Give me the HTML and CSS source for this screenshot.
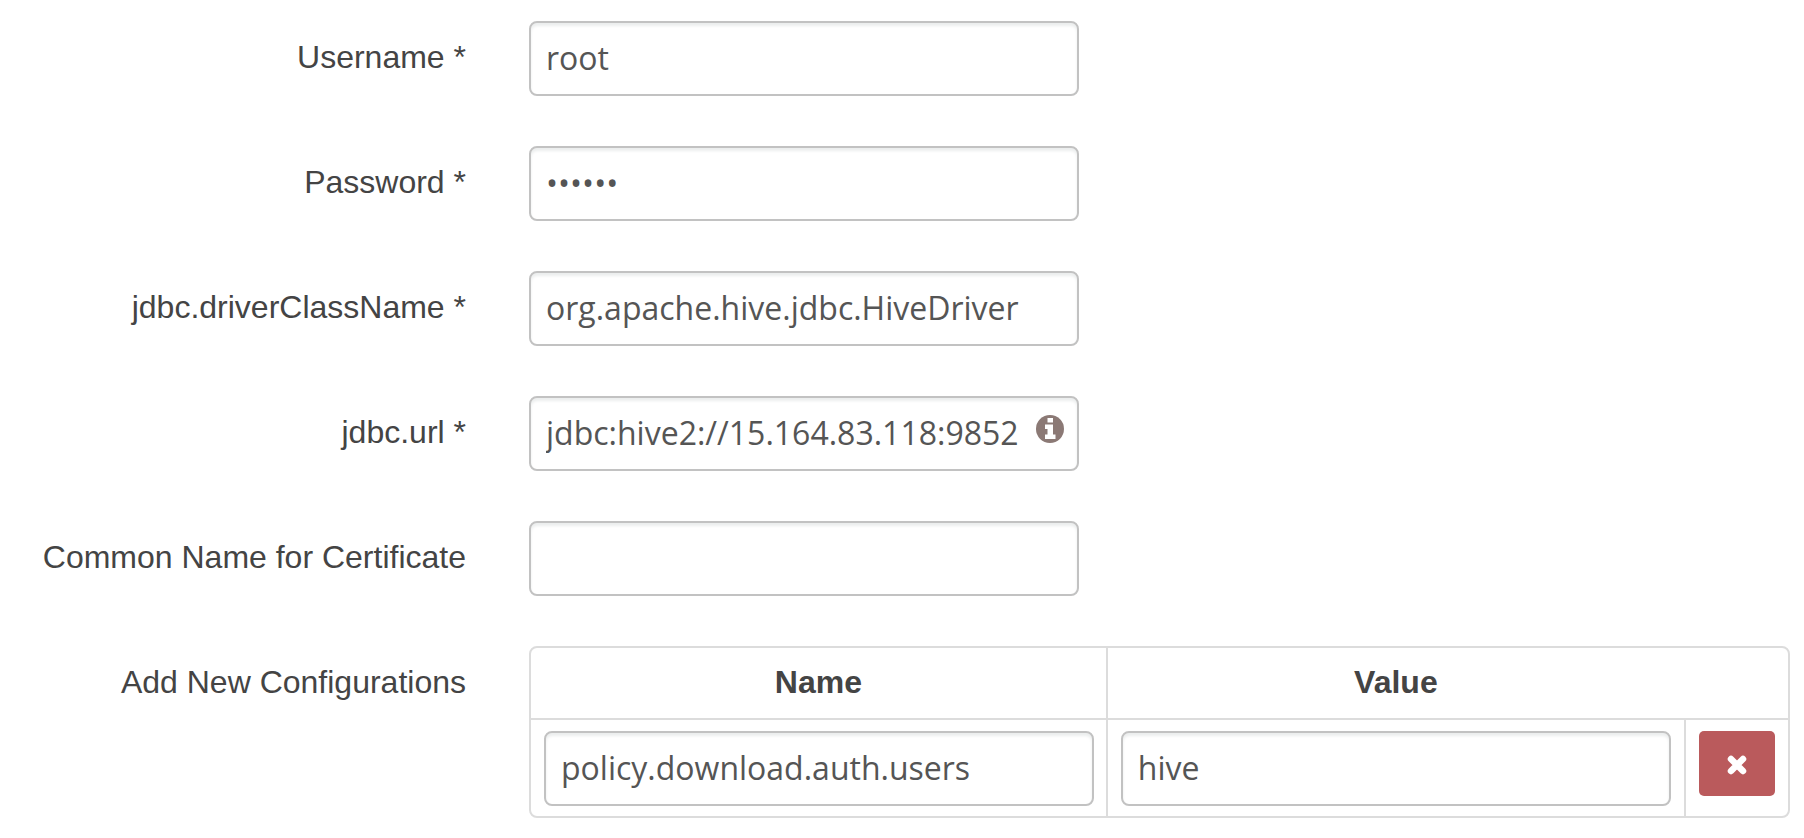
FILE: index.html
```html
<!DOCTYPE html>
<html lang="en">
<head>
<meta charset="utf-8">
<title>Service configuration</title>
<link rel="stylesheet" href="styles.css">
</head>
<body>
<form class="config-form">
  <div class="row">
    <label class="label" for="username">Username *</label>
    <div class="field"><input class="input" id="username" type="text" value="root"></div>
  </div>
  <div class="row">
    <label class="label" for="password">Password *</label>
    <div class="field"><input class="input" id="password" type="password" value="secret"></div>
  </div>
  <div class="row">
    <label class="label" for="driver">jdbc.driverClassName *</label>
    <div class="field"><input class="input" id="driver" type="text" value="org.apache.hive.jdbc.HiveDriver"></div>
  </div>
  <div class="row">
    <label class="label" for="url">jdbc.url *</label>
    <div class="field">
      <input class="input input-url" id="url" type="text" value="jdbc:hive2://15.164.83.118:9852">
      <svg class="info" viewBox="0 0 28 28" aria-hidden="true">
        <circle cx="14" cy="14" r="14" fill="#8b7975"/>
        <path fill="#fff" d="M11.500 3h5.500v4.500h-5.500zM9 9.500h8v10h2.500v4.500H9v-4.500h2.500v-5.500H9z"/>
      </svg>
    </div>
  </div>
  <div class="row">
    <label class="label" for="cn">Common Name for Certificate</label>
    <div class="field"><input class="input" id="cn" type="text"></div>
  </div>
  <div class="row">
    <span class="label" id="configs">Add New Configurations</span>
    <table class="table" aria-labelledby="configs">
      <colgroup><col><col class="col-value"><col class="col-action"></colgroup>
      <thead>
        <tr><th>Name</th><th>Value</th><th class="blank"></th></tr>
      </thead>
      <tbody>
        <tr>
          <td><input class="input" type="text" aria-label="Name" value="policy.download.auth.users"></td>
          <td><input class="input" type="text" aria-label="Value" value="hive"></td>
          <td>
            <button class="remove" type="button" aria-label="Remove">
              <svg class="cross" viewBox="0 0 20 20" aria-hidden="true"><path d="M4 4l12 12M16 4L4 16" stroke="#fff" stroke-width="6.500" stroke-linecap="round" fill="none"/></svg>
            </button>
          </td>
        </tr>
      </tbody>
    </table>
  </div>
</form>
</body>
</html>
```
FILE: styles.css
```css
* {
  box-sizing: border-box;
}

body {
  margin: 0;
  background: #fff;
  color: #444;
  font: 32px/40px "Liberation Sans", Arial, sans-serif;
}

.config-form {
  display: flex;
  flex-direction: column;
  gap: 50px;
  padding: 21px 14px 20px 0;
}

.row {
  display: grid;
  grid-template-columns: 466px minmax(0, 1fr);
  column-gap: 63px;
  align-items: start;
}

.label {
  padding-top: 16px;
  text-align: right;
}

.field {
  position: relative;
  max-width: 550px;
}

.input {
  display: block;
  width: 100%;
  height: 75px;
  padding: 0 15px 3px;
  border: 2px solid #c2c2c2;
  border-radius: 8px;
  background: #fff;
  box-shadow: inset 0 3px 3px #eceeee;
  color: #555;
  font: 32px/40px "Open Sans", sans-serif;
}

.input-url {
  padding-right: 44px;
}

.info {
  position: absolute;
  top: 19px;
  right: 15px;
  width: 28px;
  height: 28px;
}

.table {
  width: 100%;
  table-layout: fixed;
  border: 2px solid #dcdcdc;
  border-radius: 8px;
  border-spacing: 0;
}

.col-value {
  width: 46%;
}

.col-action {
  width: 104px;
}

th {
  height: 70px;
  padding: 0 0 2px;
  font-weight: bold;
  text-align: center;
}

td {
  padding: 11px 13px 10px;
  border-top: 2px solid #dcdcdc;
  vertical-align: top;
}

td:first-child {
  padding-right: 12px;
}

th + th,
td + td {
  border-left: 2px solid #dcdcdc;
}

th.blank {
  border-left: 0;
}

.remove {
  display: flex;
  align-items: center;
  justify-content: center;
  width: 76px;
  height: 65px;
  padding: 2px 0 0;
  border: 0;
  border-radius: 5px;
  background: #ba5a5c;
}

.cross {
  width: 20px;
  height: 20px;
}
```
